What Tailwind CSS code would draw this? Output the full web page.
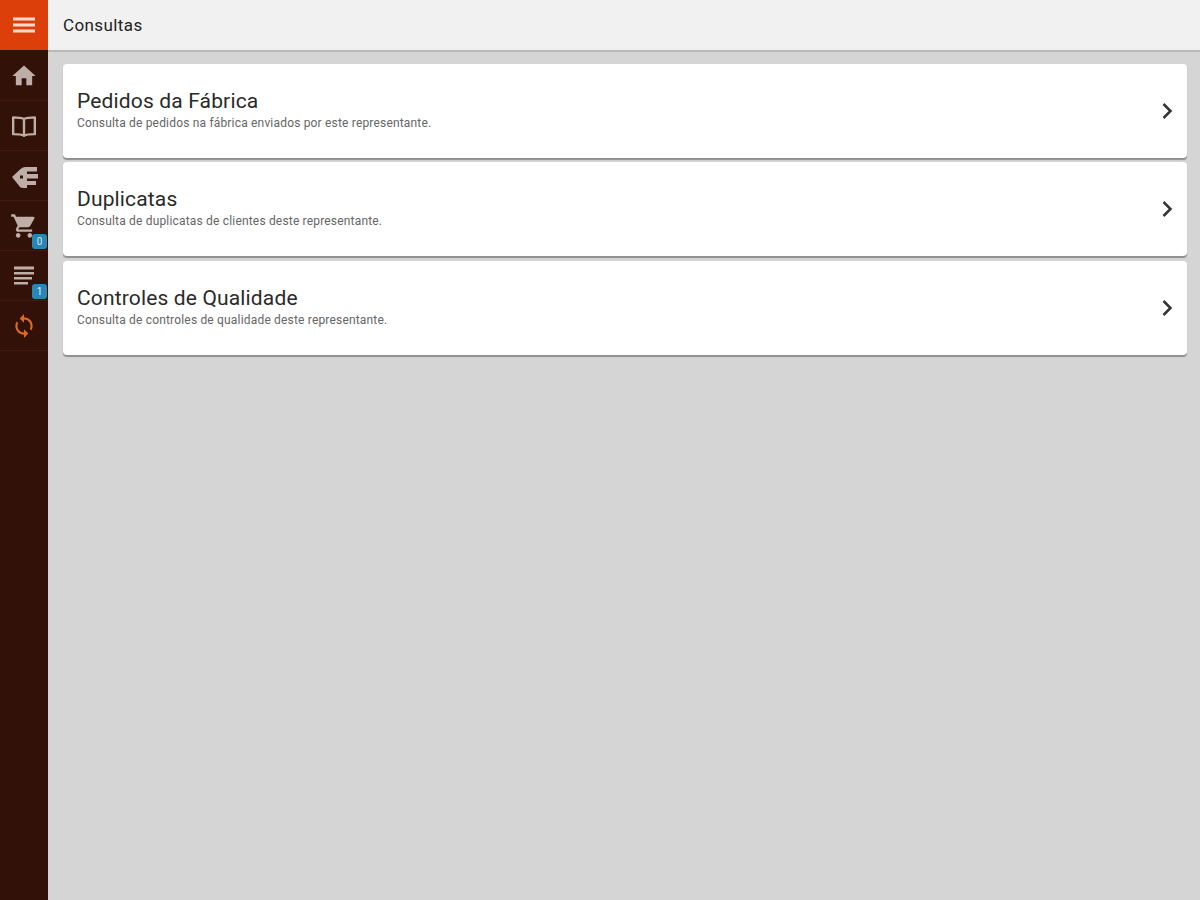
<!DOCTYPE html>
<html lang="pt">
<head>
  <meta charset="UTF-8" />
  <title>Consultas</title>
  <script src="https://cdn.jsdelivr.net/npm/@tailwindcss/browser@4"></script>
</head>
<body class="font-['Roboto',sans-serif]">
  <div class="flex h-[900px] w-[1200px] overflow-hidden bg-[#d5d5d5]">
    <!-- sidebar -->
    <nav class="flex w-[48px] shrink-0 flex-col bg-[#321108]">
      <div class="flex h-[50px] items-center justify-center bg-[#dc3f09]">
        <svg class="h-[24px] w-[24px]" viewBox="0 0 24 24" fill="#fbd9cc"><path d="M1 4.500h22v3H1zM1 10.500h22v3H1zM1 16.500h22v3H1z"/></svg>
      </div>
      <div class="flex h-[51px] items-center justify-center border-b border-[#3d1b10] pt-[1px]">
        <svg class="h-[28px] w-[28px]" viewBox="0 0 24 24" fill="#bfaea7"><path d="M10 20v-6h4v6h5v-8h3L12 3 2 12h3v8z"/></svg>
      </div>
      <div class="flex h-[50px] items-center justify-center border-b border-[#3d1b10]">
        <svg class="h-[26px] w-[26px]" viewBox="0 0 24 24" fill="none" stroke="#bfaea7" stroke-width="2.200" stroke-linejoin="round"><path d="M12 5.500C10 4.500 7 4 2 4v15.500c5 0 8 .3 10 1.500 2-1.200 5-1.500 10-1.500V4c-5 0-8 .5-10 1.500zM12 5.500V21"/></svg>
      </div>
      <div class="flex h-[50px] items-center justify-center border-b border-[#3d1b10] pl-[2px] pt-[3px]">
        <svg class="h-[28px] w-[28px]" viewBox="0 0 28 28" fill="#bfaea7"><path d="M1 14l8-7.500Q11 4 14 4h12v4.500H16V11h11v4.500H16V18h9v4h-9v3h-4q-3 0-4.500-3zM9 12.500v3h3v-3z"/></svg>
      </div>
      <div class="relative flex h-[50px] items-center justify-center border-b border-[#3d1b10]">
        <svg class="h-[28px] w-[28px]" viewBox="0 0 24 24" fill="#bfaea7"><path d="M7 18c-1.100 0-1.990.9-1.990 2S5.900 22 7 22s2-.9 2-2-.9-2-2-2zM1 2v2h2l3.600 7.590-1.350 2.450c-.16.28-.25.61-.25.96 0 1.100.9 2 2 2h12v-2H7.420c-.14 0-.25-.11-.25-.25l.03-.12.9-1.630h7.450c.75 0 1.410-.41 1.750-1.030l3.580-6.490A1 1 0 0 0 20 4H5.210l-.94-2H1zm16 16c-1.100 0-1.990.9-1.990 2s.89 2 1.990 2 2-.9 2-2-.9-2-2-2z"/></svg>
        <span class="absolute left-[32px] top-[33px] flex h-[15px] w-[15px] items-center justify-center rounded-[3px] bg-[#2a87b5] text-[10px] leading-none text-[#cfe6f2]">0</span>
      </div>
      <div class="relative flex h-[50px] items-center justify-center border-b border-[#3d1b10]">
        <svg class="h-[24px] w-[24px]" viewBox="0 0 24 24" fill="#bfaea7"><path d="M2 2.500h20v3H2zM2 8h20v2.500H2zM2 13h18v2.500H2zM2 18h14v2.500H2z"/></svg>
        <span class="absolute left-[32px] top-[33px] flex h-[15px] w-[15px] items-center justify-center rounded-[3px] bg-[#2a87b5] text-[10px] leading-none text-[#e2f0f7]">1</span>
      </div>
      <div class="flex h-[50px] items-center justify-center border-b border-[#3d1b10]">
        <svg class="h-[26px] w-[26px]" viewBox="0 0 24 24" fill="#dc6a1f"><path d="M12 4V1L8 5l4 4V6c3.310 0 6 2.690 6 6 0 1.010-.25 1.970-.7 2.800l1.460 1.460A7.930 7.930 0 0 0 20 12c0-4.420-3.580-8-8-8zm0 14c-3.310 0-6-2.690-6-6 0-1.010.25-1.970.7-2.800L5.240 7.740A7.930 7.930 0 0 0 4 12c0 4.420 3.580 8 8 8v3l4-4-4-4v3z"/></svg>
      </div>
    </nav>

    <div class="flex min-w-0 flex-1 flex-col">
      <!-- top bar -->
      <header class="flex h-[52px] shrink-0 items-center border-b-2 border-[#b9b9b9] bg-[#f1f1f1] pl-[15px] pt-[2px] text-[17px] tracking-[0.4px] text-[#222]">Consultas</header>

      <!-- cards -->
      <main class="flex flex-col gap-[4.250px] pl-[15px] pr-[13px] pt-[12px]">
        <a class="flex h-[94px] items-center justify-between rounded-[4px] bg-white pl-[14px] pr-[8px] shadow-[0_2px_1px_#8f8f8f]">
          <div class="-mt-[2px]">
            <div class="text-[21px] leading-[24px] tracking-[0.15px] text-[#2a2a2a]">Pedidos da Fábrica</div>
            <div class="mt-[2px] text-[12px] leading-[16px] tracking-[0.18px] text-[#666]">Consulta de pedidos na fábrica enviados por este representante.</div>
          </div>
          <svg class="h-[24px] w-[24px]" viewBox="0 0 24 24" fill="none" stroke="#333" stroke-width="2.500"><path d="M8.500 5l7 7-7 7"/></svg>
        </a>
        <a class="flex h-[94px] items-center justify-between rounded-[4px] bg-white pl-[14px] pr-[8px] shadow-[0_2px_1px_#8f8f8f]">
          <div class="-mt-[2px]">
            <div class="text-[21px] leading-[24px] tracking-[0.15px] text-[#2a2a2a]">Duplicatas</div>
            <div class="mt-[2px] text-[12px] leading-[16px] tracking-[0.18px] text-[#666]">Consulta de duplicatas de clientes deste representante.</div>
          </div>
          <svg class="h-[24px] w-[24px]" viewBox="0 0 24 24" fill="none" stroke="#333" stroke-width="2.500"><path d="M8.500 5l7 7-7 7"/></svg>
        </a>
        <a class="flex h-[94px] items-center justify-between rounded-[4px] bg-white pl-[14px] pr-[8px] shadow-[0_2px_1px_#8f8f8f]">
          <div class="-mt-[2px]">
            <div class="text-[21px] leading-[24px] tracking-[0.15px] text-[#2a2a2a]">Controles de Qualidade</div>
            <div class="mt-[2px] text-[12px] leading-[16px] tracking-[0.18px] text-[#666]">Consulta de controles de qualidade deste representante.</div>
          </div>
          <svg class="h-[24px] w-[24px]" viewBox="0 0 24 24" fill="none" stroke="#333" stroke-width="2.500"><path d="M8.500 5l7 7-7 7"/></svg>
        </a>
      </main>
    </div>
  </div>
</body>
</html>
